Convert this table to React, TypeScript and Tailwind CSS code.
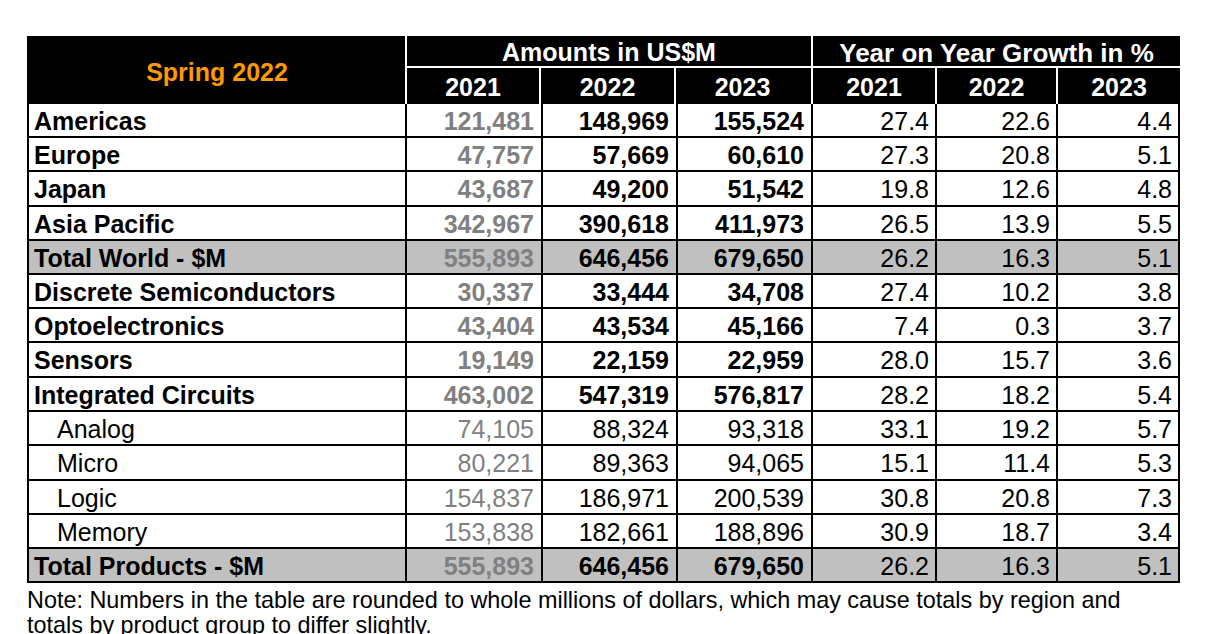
import React from "react";

type Row = {
  label: string;
  bold: boolean;
  shade?: boolean;
  h: string;
  a: [string, string, string];
  g: [string, string, string];
};

const rows: Row[] = [
  { label: "Americas", bold: true, h: "h-[34px]", a: ["121,481", "148,969", "155,524"], g: ["27.4", "22.6", "4.4"] },
  { label: "Europe", bold: true, h: "h-[34px]", a: ["47,757", "57,669", "60,610"], g: ["27.3", "20.8", "5.1"] },
  { label: "Japan", bold: true, h: "h-[35px]", a: ["43,687", "49,200", "51,542"], g: ["19.8", "12.6", "4.8"] },
  { label: "Asia Pacific", bold: true, h: "h-[34px]", a: ["342,967", "390,618", "411,973"], g: ["26.5", "13.9", "5.5"] },
  { label: "Total World - $M", bold: true, shade: true, h: "h-[34px]", a: ["555,893", "646,456", "679,650"], g: ["26.2", "16.3", "5.1"] },
  { label: "Discrete Semiconductors", bold: true, h: "h-[34px]", a: ["30,337", "33,444", "34,708"], g: ["27.4", "10.2", "3.8"] },
  { label: "Optoelectronics", bold: true, h: "h-[34px]", a: ["43,404", "43,534", "45,166"], g: ["7.4", "0.3", "3.7"] },
  { label: "Sensors", bold: true, h: "h-[35px]", a: ["19,149", "22,159", "22,959"], g: ["28.0", "15.7", "3.6"] },
  { label: "Integrated Circuits", bold: true, h: "h-[34px]", a: ["463,002", "547,319", "576,817"], g: ["28.2", "18.2", "5.4"] },
  { label: "Analog", bold: false, h: "h-[34px]", a: ["74,105", "88,324", "93,318"], g: ["33.1", "19.2", "5.7"] },
  { label: "Micro", bold: false, h: "h-[35px]", a: ["80,221", "89,363", "94,065"], g: ["15.1", "11.4", "5.3"] },
  { label: "Logic", bold: false, h: "h-[34px]", a: ["154,837", "186,971", "200,539"], g: ["30.8", "20.8", "7.3"] },
  { label: "Memory", bold: false, h: "h-[34px]", a: ["153,838", "182,661", "188,896"], g: ["30.9", "18.7", "3.4"] },
  { label: "Total Products - $M", bold: true, shade: true, h: "h-[34px]", a: ["555,893", "646,456", "679,650"], g: ["26.2", "16.3", "5.1"] },
];

const aW = ["w-[136px]", "w-[135px]", "w-[135px]"];
const gW = ["w-[124px]", "w-[121px]", "w-[122px]"];

export default function App() {
  return (
    <div
      className="min-h-[634px] w-[1210px] overflow-hidden bg-white pl-[27px] pt-[36px] text-black"
      style={{ fontFamily: '"Liberation Sans", Arial, sans-serif' }}
    >
      <div className="w-[1153px]">
        {/* Header */}
        <div className="flex h-[68px]">
          <div className="flex w-[380px] items-center justify-center border-r-2 border-white bg-black pl-[2px] pt-[4px] text-[25px] font-bold leading-none text-[#ff9900]">
            Spring 2022
          </div>
          <div className="flex w-[406px] flex-col border-r-2 border-white bg-black">
            <div className="flex h-[32px] items-center justify-center border-b-2 border-white pt-[3px] text-[25px] font-bold leading-none text-white">
              Amounts in US$M
            </div>
            <div className="flex h-[36px]">
              {["2021", "2022", "2023"].map((y, i) => (
                <div
                  key={y}
                  className={`flex items-center justify-center pt-[3px] text-[25px] font-bold leading-none text-white ${i < 2 ? "border-r-2 border-white" : ""} ${i === 0 ? "w-[134px]" : i === 1 ? "w-[135px]" : "w-[133px]"}`}
                >
                  {y}
                </div>
              ))}
            </div>
          </div>
          <div className="flex w-[367px] flex-col bg-black">
            <div className="flex h-[32px] items-center justify-center border-b-2 border-white pt-[3px] text-[26px] font-bold leading-none text-white">
              Year on Year Growth in %
            </div>
            <div className="flex h-[36px]">
              {["2021", "2022", "2023"].map((y, i) => (
                <div
                  key={y}
                  className={`flex items-center justify-center pt-[3px] text-[25px] font-bold leading-none text-white ${i < 2 ? "border-r-2 border-white" : ""} ${i === 0 ? "w-[124px]" : i === 1 ? "w-[121px]" : "w-[122px]"}`}
                >
                  {y}
                </div>
              ))}
            </div>
          </div>
        </div>

        {/* Body */}
        {rows.map((r) => (
          <div key={r.label} className={`flex ${r.h} ${r.shade ? "bg-[#c0c0c0]" : "bg-white"}`}>
            <div
              className={`flex w-[380px] items-center border-b-2 border-l-2 border-r-2 border-black pt-[2px] text-[25px] leading-none ${r.bold ? "pl-[5px] font-bold" : "pl-[28px] font-normal"}`}
            >
              {r.label}
            </div>
            {r.a.map((v, i) => (
              <div
                key={"a" + i}
                className={`flex ${aW[i]} items-center justify-end border-b-2 border-r-2 border-black pr-[7px] pt-[2px] text-[25px] leading-none ${r.bold ? "font-bold" : "font-normal"} ${i === 0 ? "text-[#808080]" : "text-black"}`}
              >
                {v}
              </div>
            ))}
            {r.g.map((v, i) => (
              <div
                key={"g" + i}
                className={`flex ${gW[i]} items-center justify-end border-b-2 border-r-2 border-black pr-[6px] pt-[2px] text-[25px] font-normal leading-none`}
              >
                {v}
              </div>
            ))}
          </div>
        ))}

        <div className="mt-[5px] w-[1130px] text-[23.4px] leading-[25px]">
          Note: Numbers in the table are rounded to whole millions of dollars, which may cause totals by region and totals by product group to differ slightly.
        </div>
      </div>
    </div>
  );
}
